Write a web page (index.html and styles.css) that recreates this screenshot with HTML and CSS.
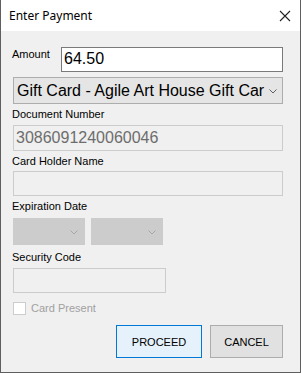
FILE: index.html
```html
<!DOCTYPE html>
<html>
<head>
<meta charset="utf-8">
<link rel="stylesheet" href="styles.css">
</head>
<body>
<div class="window">
  <div class="titlebar">
    <span class="title">Enter Payment</span>
    <svg class="close" width="12" height="12" viewBox="0 0 12 12"><path d="M1 1 L11 11 M11 1 L1 11" stroke="#222" stroke-width="1.1" fill="none"/></svg>
  </div>
  <div class="client">
    <div class="amount-row">
      <span class="label amount-label">Amount</span>
      <div class="textbox amount-box">64.50</div>
    </div>
    <div class="combo tender">
      <span class="combo-text">Gift Card - Agile Art House Gift Car</span>
      <svg class="chev" width="8" height="5" viewBox="0 0 8 5"><path d="M0.5 0.5 L4 4 L7.5 0.5" stroke="#606060" stroke-width="1" fill="none"/></svg>
    </div>
    <div class="label lbl-doc">Document Number</div>
    <div class="textbox disabled doc-box">3086091240060046</div>
    <div class="label lbl-ch">Card Holder Name</div>
    <div class="textbox disabled ch-box"></div>
    <div class="label lbl-exp">Expiration Date</div>
    <div class="exp-row">
      <div class="combo dis-combo">
        <svg class="chev" width="8" height="5" viewBox="0 0 8 5"><path d="M0.5 0.5 L4 4 L7.5 0.5" stroke="#a8a8a8" stroke-width="1" fill="none"/></svg>
      </div>
      <div class="combo dis-combo">
        <svg class="chev" width="8" height="5" viewBox="0 0 8 5"><path d="M0.5 0.5 L4 4 L7.5 0.5" stroke="#a8a8a8" stroke-width="1" fill="none"/></svg>
      </div>
    </div>
    <div class="label lbl-sec">Security Code</div>
    <div class="textbox disabled sec-box"></div>
    <div class="check-row">
      <span class="checkbox"></span>
      <span class="check-label">Card Present</span>
    </div>
    <div class="buttons">
      <div class="btn btn-default">PROCEED</div>
      <div class="btn">CANCEL</div>
    </div>
  </div>
</div>
</body>
</html>
```
FILE: styles.css
```css
* { box-sizing: border-box; }
html, body { margin: 0; padding: 0; background: #ffffff; }
body { font-family: "Liberation Sans", Arial, sans-serif; }

.window {
  width: 301px;
  height: 373px;
  border: 1px solid #5f5f5f;
  border-top: none;
  background: #f0f0f0;
  display: flex;
  flex-direction: column;
}

.titlebar {
  height: 31px;
  background: #ffffff;
  display: flex;
  align-items: center;
  justify-content: space-between;
  padding: 0 9px 0 8px;
  flex: none;
}
.title {
  font-family: "Noto Sans", "Liberation Sans", sans-serif;
  font-size: 12px;
  color: #000;
  margin-top: -1px;
}
.close { display: block; }

.client {
  flex: 1;
  padding: 16px 16px 0 12px;
  display: flex;
  flex-direction: column;
  align-items: flex-start;
}

.label {
  font-size: 11px;
  line-height: 13px;
  color: #000;
  margin-left: -1px;
}

.amount-row {
  display: flex;
  align-items: flex-start;
  width: 270px;
}
.amount-label { margin-top: 1px; width: 49px; flex: none; }

.textbox {
  background: #fff;
  border: 1px solid #7a7a7a;
  font-size: 16px;
  line-height: 23px;
  padding-left: 2px;
  color: #000;
}
.amount-box { width: 222px; height: 25px; line-height: 22px; }

.textbox.disabled {
  background: #f0f0f0;
  border-color: #cccccc;
  color: #6d6d6d;
}

.combo {
  display: flex;
  align-items: center;
  background: #e5e5e5;
  border: 1px solid #adadad;
  height: 27px;
  position: relative;
}
.tender { width: 270px; margin-top: 5px; padding-left: 3px; }
.combo-text {
  font-size: 16px;
  white-space: nowrap;
  color: #000;
}
.chev { position: absolute; right: 5px; top: 11px; }

.lbl-doc { margin-top: 4px; }
.doc-box { width: 270px; height: 26px; margin-top: 4px; }
.lbl-ch { margin-top: 4px; }
.ch-box { width: 270px; height: 25px; margin-top: 3px; }
.lbl-exp { margin-top: 4px; }
.exp-row { display: flex; gap: 6px; margin-top: 5px; }
.dis-combo { width: 72px; background: #cccccc; border-color: #cccccc; }
.dis-combo .chev { right: 6px; top: 11px; }
.lbl-sec { margin-top: 6px; }
.sec-box { width: 153px; height: 25px; margin-top: 4px; }

.check-row {
  display: flex;
  align-items: center;
  margin-top: 9px;
  height: 13px;
}
.checkbox {
  width: 13px;
  height: 13px;
  border: 1px solid #cccccc;
  background: #ffffff;
}
.check-label {
  font-size: 11px;
  color: #a0a0a0;
  margin-left: 5px;
  line-height: 13px;
}

.buttons {
  display: flex;
  gap: 8px;
  margin-top: 10px;
  align-self: flex-end;
  margin-right: 1px;
}
.btn {
  height: 33px;
  width: 73px;
  border: 1px solid #adadad;
  background: #e1e1e1;
  font-size: 11px;
  display: flex;
  align-items: center;
  justify-content: center;
  color: #000;
}
.btn-default {
  width: 86px;
  border-color: #0078d7;
  background: #e5f1fb;
}
```
